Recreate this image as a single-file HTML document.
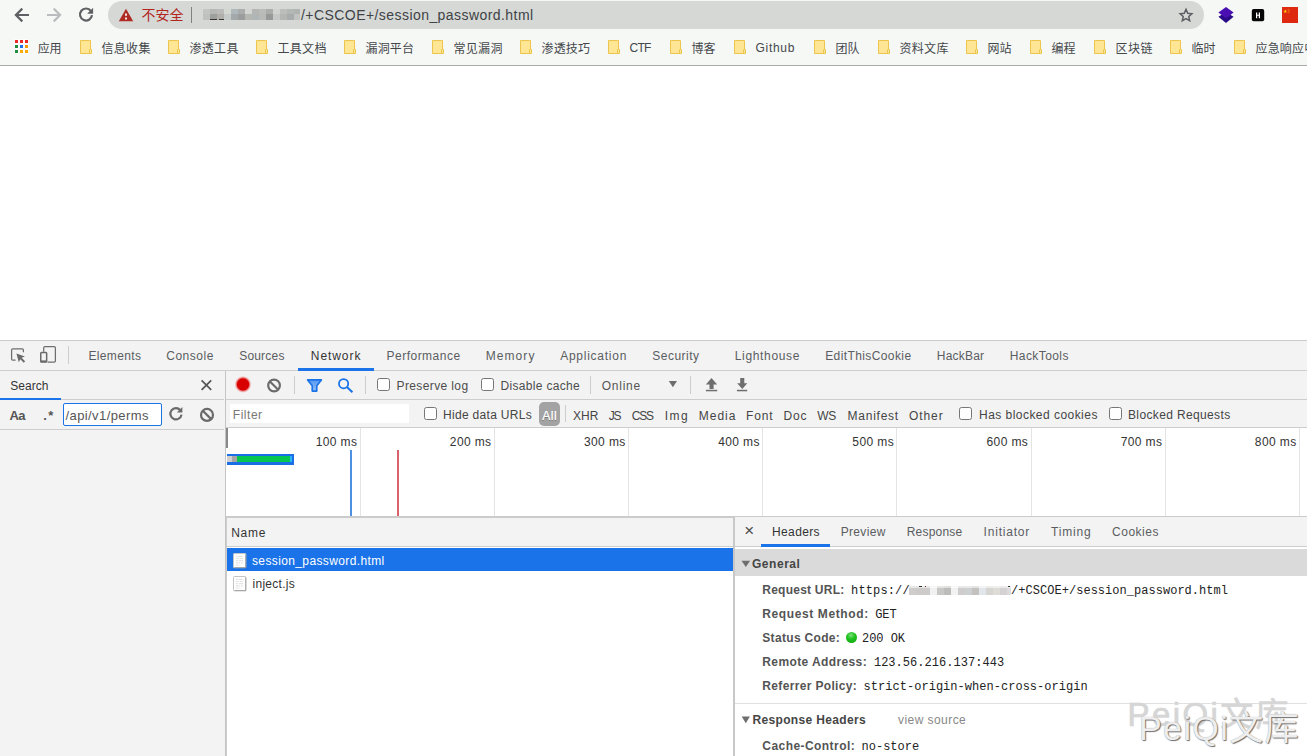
<!DOCTYPE html>
<html lang="zh-CN">
<head>
<meta charset="utf-8">
<title>session_password.html - DevTools Network</title>
<style>
*{box-sizing:border-box;margin:0;padding:0}
html,body{width:1307px;height:756px;overflow:hidden;background:#fff}
body{position:relative;font-family:"Liberation Sans","Noto Sans CJK SC",sans-serif;font-size:12px;color:#333}
div,i,svg,span.t{position:absolute}
.g{left:0;top:0;width:0;height:0}
i{display:block}
.t{white-space:pre;line-height:1;font-size:12px;color:#333}
.m{font-family:"Liberation Mono","Noto Sans CJK SC",monospace}
.b{font-weight:700}
/* browser chrome */
#chrome{left:0;top:0;width:1307px;height:66px;background:#f6f8f6;border-bottom:1px solid #a9aba8}
#omni{left:108px;top:1px;width:1096px;height:28px;border-radius:14px;background:#d5d8d5}
#sep{left:191px;top:7px;width:1px;height:16px;background:#7f827f}
.fold{top:40px}
/* page */
#page{left:0;top:66px;width:1307px;height:274px;background:#fff}
/* devtools */
#dt{left:0;top:340px;width:1307px;height:416px;background:#f3f3f3;border-top:1px solid #cacaca}
.hl{height:1px;background:#cdcdcd}
.vl{width:1px;background:#cdcdcd}
.cb{width:13px;height:13px;border:1px solid #767676;border-radius:2.5px;background:#fff}
.gl{top:428px;width:1px;height:88px;background:#e4e4e4}
.und{height:2.5px;background:#1a73e8}
#wm1,#wm2{white-space:pre;line-height:1;font-size:34px;font-family:"Liberation Sans","Noto Sans CJK SC",sans-serif}
</style>
</head>
<body>
<svg width="0" height="0" style="position:absolute">
<defs>
<g id="fold"><path d="M0.5 0.5h10v9h1v4h-11z" fill="#ffe694" stroke="#ecc44e" stroke-width="1"/><path d="M9.500 9.500v4" stroke="#ecc44e" stroke-width="1" fill="none"/></g>
<g id="doc"><rect x=".5" y=".5" width="12.300" height="14.200" rx=".8" fill="#fff" stroke="#c4c4c4"/><path d="M12.800 1.500v13.200H1.500" fill="none" stroke="#8f8f8f" stroke-opacity=".75"/><path d="M2.800 3.300h2M5.800 3.300h4M2.800 5.500h3M6.800 5.500h3.200M2.800 7.700h2.400M6 7.700h4M2.800 9.900h4M7.800 9.900h2M2.800 12.100h2.600M6.400 12.100h1" stroke="#e4e4e4" stroke-width="1.200"/></g>
</defs>
</svg>

<!-- ================= Browser toolbar ================= -->
<div id="chrome">
  <!-- back / forward / reload -->
  <svg style="left:12px;top:5px" width="20" height="20" viewBox="0 0 20 20"><path d="M17 10H4.400M10.300 3.600L3.900 10l6.400 6.400" fill="none" stroke="#5e6063" stroke-width="2.200"/></svg>
  <svg style="left:44px;top:5px" width="20" height="20" viewBox="0 0 20 20"><path d="M3 10h12.600M9.700 3.600l6.400 6.400-6.400 6.400" fill="none" stroke="#bbbcbe" stroke-width="2.200"/></svg>
  <svg style="left:76px;top:5px" width="20" height="20" viewBox="0 0 20 20"><path d="M14.900 6A6 6 0 1 0 16 10.200" fill="none" stroke="#5e6063" stroke-width="2.200"/><path d="M17.100 2.800v6h-6z" fill="#5e6063"/></svg>
  <div id="omni"></div>
  <!-- not secure triangle -->
  <svg style="left:118px;top:7.600px" width="16" height="14" viewBox="0 0 16 14"><path d="M8 .8L15.200 13.200H.8z" fill="#ae2a22"/><path d="M7 5.400h2v2.300H7zM7 9.600h2v1.800H7z" fill="#f6e4e1"/></svg>
  <i id="sep"></i>
  <!-- blurred host (mosaic) -->
  <svg style="left:203px;top:9px" width="98" height="11" viewBox="0 0 98 11" shape-rendering="crispEdges">
    <rect x="0" y="0" width="7" height="5.4" fill="#c3c5c3"/><rect x="0" y="5.4" width="7" height="5.4" fill="#bfc1bf"/>
    <rect x="7" y="0" width="7" height="5.4" fill="#b5b8b6"/><rect x="7" y="5.4" width="7" height="5.4" fill="#9da09e"/>
    <rect x="14" y="0" width="7" height="5.4" fill="#bbbcba"/><rect x="14" y="5.4" width="7" height="5.4" fill="#b0afaa"/>
    <rect x="21" y="0" width="7" height="5.4" fill="#d5d7d1"/><rect x="21" y="5.4" width="7" height="5.4" fill="#c6cac8"/>
    <rect x="28" y="0" width="7" height="5.4" fill="#afb9bc"/><rect x="28" y="5.4" width="7" height="5.4" fill="#a3a9aa"/>
    <rect x="35" y="0" width="7" height="5.4" fill="#a9adab"/><rect x="35" y="5.4" width="7" height="5.4" fill="#9a9d9b"/>
    <rect x="42" y="0" width="7" height="5.4" fill="#d3d5d2"/><rect x="42" y="5.4" width="7" height="5.4" fill="#b5b8b2"/>
    <rect x="49" y="0" width="7" height="5.4" fill="#b3b6b3"/><rect x="49" y="5.4" width="7" height="5.4" fill="#b0b5b5"/>
    <rect x="56" y="0" width="7" height="5.4" fill="#babcba"/><rect x="56" y="5.4" width="7" height="5.4" fill="#b8bab8"/>
    <rect x="63" y="0" width="7" height="5.4" fill="#a9adab"/><rect x="63" y="5.4" width="7" height="5.4" fill="#969997"/>
    <rect x="70" y="0" width="7" height="5.4" fill="#d0d3d0"/><rect x="70" y="5.4" width="7" height="5.4" fill="#c5c8c6"/>
    <rect x="77" y="0" width="7" height="5.4" fill="#bcbebc"/><rect x="77" y="5.4" width="7" height="5.4" fill="#b4b6b4"/>
    <rect x="84" y="0" width="7" height="5.4" fill="#b4b8b5"/><rect x="84" y="5.4" width="7" height="5.4" fill="#a8acad"/>
    <rect x="91" y="0" width="6" height="5.4" fill="#b0b3b1"/><rect x="91" y="5.4" width="6" height="5.4" fill="#c0c3c0"/>
    <rect x="7" y="10" width="7" height="1" fill="#3a3532"/><rect x="16" y="10" width="4.5" height="1" fill="#3a3532"/>
  </svg>
  <!-- star -->
  <svg style="left:1178px;top:7px" width="16" height="16" viewBox="0 0 16 16"><path d="M8 2.400l1.750 3.950 4.150.4-3.150 2.800.95 4.150L8 11.500l-3.700 2.200.95-4.150L2.100 6.750l4.150-.4z" fill="none" stroke="#5b5e62" stroke-width="1.5" stroke-linejoin="miter"/></svg>
  <!-- extension icons -->
  <svg style="left:1217px;top:6px" width="18" height="18" viewBox="0 0 18 18"><path d="M9 6.2l7.6 4.6L9 17 1.4 10.8z" fill="#2a0a86"/><path d="M9 1l7.6 5.6L9 12.2 1.4 6.6z" fill="#4a0fb3"/></svg>
  <svg style="left:1251px;top:9px" width="14" height="13" viewBox="0 0 14 13"><rect x=".8" y=".1" width="12.4" height="12.2" rx="1.8" fill="#050505"/><path d="M5 3.4h1.200v2.300h1.600V3.400H9v5.800H7.800V6.800H6.200v2.400H5z" fill="#fff"/></svg>
  <svg style="left:1282px;top:7px" width="16" height="16" viewBox="0 0 16 16"><rect width="16" height="16" fill="#de2910"/><path d="M3.300 2.500l.45 1.300h1.400l-1.150.85.45 1.350-1.150-.85-1.150.85.45-1.350-1.150-.85h1.400z" fill="#ffde00"/><circle cx="6.100" cy="2.200" r=".45" fill="#ffde00"/><circle cx="7" cy="3.300" r=".45" fill="#ffde00"/><circle cx="7" cy="4.700" r=".45" fill="#ffde00"/><circle cx="6.100" cy="5.800" r=".45" fill="#ffde00"/></svg>
  <!-- bookmarks bar -->
  <svg style="left:14px;top:39px" width="15" height="15" viewBox="0 0 15 15">
    <rect x="0" y="0" width="15" height="15" fill="#fbfcfb"/>
    <rect x="1" y="1" width="3" height="3" fill="#ea2a26"/><rect x="6" y="1" width="3" height="3" fill="#ea2a26"/><rect x="11" y="1" width="3" height="3" fill="#ea2a26"/>
    <rect x="1" y="6" width="3" height="3" fill="#1e8e3e"/><rect x="6" y="6" width="3" height="3" fill="#1a73e8"/><rect x="11" y="6" width="3" height="3" fill="#ee9a00"/>
    <rect x="1" y="11" width="3" height="3" fill="#1e8e3e"/><rect x="6" y="11" width="3" height="3" fill="#f9ab00"/><rect x="11" y="11" width="3" height="3" fill="#f9ab00"/>
  </svg>
  <svg class="fold" style="left:80px" width="13" height="15" viewBox="0 0 13 15"><use href="#fold"/></svg><svg class="fold" style="left:168px" width="13" height="15" viewBox="0 0 13 15"><use href="#fold"/></svg><svg class="fold" style="left:256px" width="13" height="15" viewBox="0 0 13 15"><use href="#fold"/></svg><svg class="fold" style="left:344px" width="13" height="15" viewBox="0 0 13 15"><use href="#fold"/></svg><svg class="fold" style="left:432px" width="13" height="15" viewBox="0 0 13 15"><use href="#fold"/></svg><svg class="fold" style="left:520px" width="13" height="15" viewBox="0 0 13 15"><use href="#fold"/></svg><svg class="fold" style="left:608px" width="13" height="15" viewBox="0 0 13 15"><use href="#fold"/></svg><svg class="fold" style="left:670px" width="13" height="15" viewBox="0 0 13 15"><use href="#fold"/></svg><svg class="fold" style="left:734px" width="13" height="15" viewBox="0 0 13 15"><use href="#fold"/></svg><svg class="fold" style="left:814px" width="13" height="15" viewBox="0 0 13 15"><use href="#fold"/></svg><svg class="fold" style="left:878px" width="13" height="15" viewBox="0 0 13 15"><use href="#fold"/></svg><svg class="fold" style="left:966px" width="13" height="15" viewBox="0 0 13 15"><use href="#fold"/></svg><svg class="fold" style="left:1030px" width="13" height="15" viewBox="0 0 13 15"><use href="#fold"/></svg><svg class="fold" style="left:1094px" width="13" height="15" viewBox="0 0 13 15"><use href="#fold"/></svg><svg class="fold" style="left:1170px" width="13" height="15" viewBox="0 0 13 15"><use href="#fold"/></svg><svg class="fold" style="left:1234px" width="13" height="15" viewBox="0 0 13 15"><use href="#fold"/></svg>
</div>

<!-- ================= Page (blank) ================= -->
<div id="page"></div>

<!-- ================= DevTools ================= -->
<div id="dt"></div>
<!-- main tab strip -->
<!-- DevTools toolbar icons (page coordinates) -->
<svg id="ico" style="left:0;top:340px" width="1307" height="100" viewBox="0 340 1307 100">
  <defs><radialGradient id="rec"><stop offset="0" stop-color="#d80000"/><stop offset=".66" stop-color="#d80000"/><stop offset=".76" stop-color="#e85050" stop-opacity=".8"/><stop offset="1" stop-color="#f5aaaa" stop-opacity="0"/></radialGradient>
  <linearGradient id="fun" x1="0" y1="0" x2="0" y2="1"><stop offset="0" stop-color="#5a9af0"/><stop offset="1" stop-color="#8bbaf6"/></linearGradient></defs>
  <!-- inspect element -->
  <path d="M23.400 352.200V350.100a1.200 1.200 0 0 0-1.200-1.200H12.800a1.200 1.200 0 0 0-1.200 1.200V359a1.200 1.200 0 0 0 1.200 1.200H15.600" fill="none" stroke="#6e6e6e" stroke-width="1.250"/>
  <path d="M16.400 353.500l8.500 3-3.300 1.350 3.500 3.500-1.300 1.300-3.500-3.500-1.500 3.150z" fill="#6a6a6a"/>
  <!-- device toolbar -->
  <path d="M43.700 351.800V347.900a1.200 1.200 0 0 1 1.200-1.200H54.200a1.200 1.200 0 0 1 1.200 1.200V361a1.200 1.200 0 0 1-1.200 1.200H47.600" fill="none" stroke="#6e6e6e" stroke-width="1.250"/>
  <rect x="40.750" y="352.400" width="5.900" height="9.700" rx=".8" fill="none" stroke="#6a6a6a" stroke-width="1.500"/>
  <path d="M40.750 361.300h5.900" stroke="#6a6a6a" stroke-width="1.800"/>
  <!-- search drawer: close, refresh, clear -->
  <path d="M201.600 380.300l9.600 9.600M211.200 380.300l-9.600 9.600" stroke="#555" stroke-width="1.700" fill="none"/>
  <path d="M180.300 410.200A5.600 5.600 0 1 0 181.500 414.600" fill="none" stroke="#6a6a6a" stroke-width="2.200"/>
  <path d="M182.400 407v5.600h-5.600z" fill="#6a6a6a"/>
  <circle cx="207" cy="414.900" r="6" fill="none" stroke="#6a6a6a" stroke-width="2.200"/><path d="M202.800 410.700l8.400 8.400" stroke="#6a6a6a" stroke-width="2.200"/>
  <!-- record, clear -->
  <circle cx="243" cy="384.400" r="8.600" fill="url(#rec)"/>
  <circle cx="274.050" cy="385.500" r="5.850" fill="none" stroke="#6a6a6a" stroke-width="2.150"/><path d="M269.900 381.400l8.300 8.300" stroke="#6a6a6a" stroke-width="2.150"/>
  <!-- filter, search -->
  <path d="M307.600 379.900h13.800l-4.600 5.900v5.300h-4.600v-5.300z" fill="url(#fun)" stroke="#1a73e8" stroke-width="1.600" stroke-linejoin="round"/>
  <circle cx="343.600" cy="383.700" r="4.600" fill="none" stroke="#1a73e8" stroke-width="1.800"/><path d="M346.900 387l5.500 5.200" stroke="#1a73e8" stroke-width="2.100"/>
  <!-- throttling dropdown arrow, import / export HAR -->
  <path d="M668.800 381h8.200l-4.100 6.200z" fill="#6e6e6e"/>
  <path d="M711.500 378l5.700 6.600h-3.600v4.400h-4.100v-4.400h-3.600z" fill="#6e6e6e"/><path d="M705.900 390.550h11.300" stroke="#6e6e6e" stroke-width="1.500"/>
  <path d="M740.200 378h4.100v5.300h3l-5.050 5.800-5.050-5.800h3z" fill="#6e6e6e"/><path d="M736.900 390.550h10.300" stroke="#6e6e6e" stroke-width="1.500"/>
</svg>
<i class="vl" style="left:68px;top:346px;height:18px"></i>
<i class="hl" style="left:0;top:370px;width:1307px"></i>
<i class="und" style="left:298px;top:368px;width:76px;height:3px"></i>

<!-- left: Search drawer -->
<i class="vl" style="left:225px;top:371px;height:385px;background:#c4c4c4"></i>
<i class="hl" style="left:0;top:399px;width:224px"></i>
<i class="und" style="left:0;top:397.500px;width:61px"></i>
<i style="left:63px;top:403px;width:99px;height:23px;background:#fff;border:1.500px solid #1a73e8;border-radius:2px"></i>
<i class="hl" style="left:0;top:429px;width:224px"></i>

<!-- right: Network toolbar -->
<i class="hl" style="left:226px;top:399px;width:1081px"></i>
<i class="vl" style="left:294px;top:376px;height:18px"></i>
<i class="vl" style="left:365px;top:376px;height:18px"></i>
<i class="cb" style="left:377px;top:378px"></i>
<i class="cb" style="left:481px;top:378px"></i>
<i class="vl" style="left:590px;top:376px;height:18px"></i>
<i class="vl" style="left:690px;top:376px;height:18px"></i>

<!-- filter row -->
<i style="left:230px;top:404px;width:179px;height:19px;background:#fff"></i>
<i class="cb" style="left:423.500px;top:407px"></i>
<i style="left:539px;top:402px;width:21px;height:23.500px;border-radius:5px;background:#a3a3a3"></i>
<i class="vl" style="left:565px;top:405px;height:17px"></i>
<i class="cb" style="left:959px;top:407px"></i>
<i class="cb" style="left:1109px;top:407px"></i>
<i class="hl" style="left:226px;top:427px;width:1081px"></i>

<!-- timeline overview -->
<i style="left:226px;top:428px;width:1081px;height:88px;background:#fff"></i>
<i class="gl" style="left:359.7px"></i><i class="gl" style="left:493.8px"></i><i class="gl" style="left:628.0px"></i><i class="gl" style="left:762.2px"></i><i class="gl" style="left:896.3px"></i><i class="gl" style="left:1030.5px"></i><i class="gl" style="left:1164.7px"></i><i class="gl" style="left:1298.9px"></i>
<i style="left:226.300px;top:428px;width:1.700px;height:19.600px;background:#888"></i>
<i style="left:226.500px;top:454px;width:67.500px;height:11px;background:#1a6ee6"></i>
<i style="left:226.500px;top:456.300px;width:5.500px;height:5.500px;background:#cfcfcf"></i>
<i style="left:232px;top:456.300px;width:5px;height:5.500px;background:#a5a5a5"></i>
<i style="left:237px;top:456.300px;width:53px;height:5.500px;background:#04c650"></i>
<i style="left:290px;top:456.300px;width:2px;height:5.500px;background:#2bb4f6"></i>
<i style="left:350px;top:450px;width:1.5px;height:66px;background:#4d8fe0"></i>
<i style="left:397.3px;top:450px;width:1.5px;height:66px;background:#d9626c"></i>
<i style="left:226px;top:516px;width:1081px;height:1px;background:#cbcbcb"></i>
<i style="left:226px;top:517px;width:509px;height:1px;background:#cbcbcb"></i>

<!-- request list -->
<i style="left:226px;top:546px;width:507px;height:210px;background:#fff"></i>
<i class="hl" style="left:226px;top:546px;width:507px"></i>
<i style="left:227px;top:548px;width:506px;height:23px;background:#1a73e8"></i>
<i class="vl" style="left:226px;top:518px;height:238px"></i>
<svg style="left:233px;top:552.500px" width="14" height="16" viewBox="0 0 14 16"><use href="#doc"/></svg>
<svg style="left:233px;top:575.500px" width="14" height="16" viewBox="0 0 14 16"><use href="#doc"/></svg>
<i style="left:733px;top:517px;width:2px;height:239px;background:#c8c8c8"></i>

<!-- request details -->
<i style="left:735px;top:546px;width:572px;height:210px;background:#fff"></i>
<i class="hl" style="left:735px;top:546px;width:572px"></i>
<i class="und" style="left:761px;top:544px;width:69px;height:3px"></i>
<i style="left:735px;top:549px;width:572px;height:27px;background:#dadada"></i>
<svg style="left:740.5px;top:560px" width="10" height="8" viewBox="0 0 10 8"><path d="M.5.8h8.600L4.800 7z" fill="#6e6e6e"/></svg>
<i style="left:846px;top:632px;width:11px;height:11px;border-radius:50%;background:radial-gradient(circle at 45% 30%,#7be07b 0,#1fc21f 40%,#0ea00e 100%)"></i>
<!-- blurred host in Request URL -->
<svg style="left:909px;top:586px" width="102" height="9" viewBox="0 0 102 9" shape-rendering="crispEdges">
  <rect x="0" y="0" width="7" height="2" fill="#e8e8e8"/><rect x="0" y="2" width="7" height="7" fill="#cecdcc"/>
  <rect x="7" y="0" width="7" height="2" fill="#e8e7e7"/><rect x="7" y="2" width="7" height="7" fill="#cccbca"/>
  <rect x="14" y="0" width="7" height="2" fill="#e8e8e7"/><rect x="14" y="2" width="7" height="7" fill="#cdcccb"/>
  <rect x="21" y="0" width="7" height="2" fill="#f8f8f8"/><rect x="21" y="2" width="7" height="7" fill="#f0f1f0"/>
  <rect x="28" y="0" width="7" height="2" fill="#e6e6e5"/><rect x="28" y="2" width="7" height="7" fill="#c8c8c7"/>
  <rect x="35" y="0" width="7" height="2" fill="#e0e0df"/><rect x="35" y="2" width="7" height="7" fill="#bcbcba"/>
  <rect x="42" y="0" width="7" height="2" fill="#f8f9f8"/><rect x="42" y="2" width="7" height="7" fill="#f1f2f1"/>
  <rect x="49" y="0" width="7" height="2" fill="#e9e8e8"/><rect x="49" y="2" width="7" height="7" fill="#cfcccd"/>
  <rect x="56" y="0" width="7" height="2" fill="#e8e9ea"/><rect x="56" y="2" width="7" height="7" fill="#cdd0d1"/>
  <rect x="63" y="0" width="7" height="2" fill="#e4e3e1"/><rect x="63" y="2" width="7" height="7" fill="#c4c2be"/>
  <rect x="70" y="0" width="7" height="2" fill="#f1f3f5"/><rect x="70" y="2" width="7" height="7" fill="#e2e6ea"/>
  <rect x="77" y="0" width="7" height="2" fill="#edecea"/><rect x="77" y="2" width="7" height="7" fill="#d7d5d1"/>
  <rect x="84" y="0" width="7" height="2" fill="#efefed"/><rect x="84" y="2" width="7" height="7" fill="#dddcd7"/>
  <rect x="91" y="0" width="7" height="2" fill="#eceaeb"/><rect x="91" y="2" width="7" height="7" fill="#d5d2d3"/>
  <rect x="98" y="0" width="3.6" height="2" fill="#efeff0"/><rect x="98" y="2" width="3.6" height="7" fill="#dcdcde"/>
  <rect x="10" y="0" width="2.5" height="1" fill="#333"/><rect x="16" y="0" width="1" height="1" fill="#722"/><rect x="99" y="0" width="1.5" height="1" fill="#333"/>
</svg>
<i style="left:735px;top:703px;width:572px;height:1px;background:#e0e0e0"></i>
<svg style="left:740.5px;top:716px" width="10" height="8" viewBox="0 0 10 8"><path d="M.7.4h8.200L4.800 7.200z" fill="#6e6e6e"/></svg>

<div class="g" id="omnibox">
<span id="t0" class="t" style="left:141.50px;top:8.00px;font-size:14px;color:#b3261e;letter-spacing:-0.050px;">不安全</span>
<span id="t1" class="t" style="left:301.00px;top:8.00px;font-size:14px;color:#404347;letter-spacing:0.437px;">/+CSCOE+/session_password.html</span>
</div>
<div class="g" id="bookmarks">
<span id="t2" class="t" style="left:37.70px;top:43.00px;color:#44474a;letter-spacing:-0.116px;">应用</span>
<span id="t3" class="t" style="left:101.50px;top:43.00px;color:#44474a;letter-spacing:0.295px;">信息收集</span>
<span id="t4" class="t" style="left:189.50px;top:43.00px;color:#44474a;letter-spacing:0.295px;">渗透工具</span>
<span id="t5" class="t" style="left:277.50px;top:43.00px;color:#44474a;letter-spacing:0.295px;">工具文档</span>
<span id="t6" class="t" style="left:365.50px;top:43.00px;color:#44474a;letter-spacing:0.128px;">漏洞平台</span>
<span id="t7" class="t" style="left:453.50px;top:43.00px;color:#44474a;letter-spacing:0.295px;">常见漏洞</span>
<span id="t8" class="t" style="left:541.50px;top:43.00px;color:#44474a;letter-spacing:0.128px;">渗透技巧</span>
<span id="t9" class="t" style="left:629.50px;top:42.00px;color:#44474a;letter-spacing:-0.714px;">CTF</span>
<span id="t10" class="t" style="left:691.50px;top:43.00px;color:#44474a;letter-spacing:-0.116px;">博客</span>
<span id="t11" class="t" style="left:755.50px;top:42.00px;color:#44474a;letter-spacing:0.708px;">Github</span>
<span id="t12" class="t" style="left:835.50px;top:43.00px;color:#44474a;letter-spacing:-0.116px;">团队</span>
<span id="t13" class="t" style="left:899.50px;top:43.00px;color:#44474a;letter-spacing:0.295px;">资料文库</span>
<span id="t14" class="t" style="left:987.50px;top:43.00px;color:#44474a;letter-spacing:-0.116px;">网站</span>
<span id="t15" class="t" style="left:1051.50px;top:43.00px;color:#44474a;letter-spacing:-0.116px;">编程</span>
<span id="t16" class="t" style="left:1115.50px;top:43.00px;color:#44474a;letter-spacing:0.442px;">区块链</span>
<span id="t17" class="t" style="left:1191.50px;top:43.00px;color:#44474a;letter-spacing:-0.116px;">临时</span>
<span id="t18" class="t" style="left:1255.50px;top:43.00px;color:#44474a;letter-spacing:0.177px;">应急响应中心</span>
</div>
<div class="g" id="dt-tabs">
<span id="t19" class="t" style="left:88.50px;top:350.00px;color:#5a5d61;letter-spacing:0.338px;">Elements</span>
<span id="t20" class="t" style="left:166.20px;top:350.00px;color:#5a5d61;letter-spacing:0.528px;">Console</span>
<span id="t21" class="t" style="left:239.20px;top:350.00px;color:#5a5d61;letter-spacing:0.195px;">Sources</span>
<span id="t22" class="t" style="left:310.80px;top:350.00px;letter-spacing:0.931px;">Network</span>
<span id="t23" class="t" style="left:386.50px;top:350.00px;color:#5a5d61;letter-spacing:0.490px;">Performance</span>
<span id="t24" class="t" style="left:485.80px;top:350.00px;color:#5a5d61;letter-spacing:1.051px;">Memory</span>
<span id="t25" class="t" style="left:560.20px;top:350.00px;color:#5a5d61;letter-spacing:0.748px;">Application</span>
<span id="t26" class="t" style="left:652.20px;top:350.00px;color:#5a5d61;letter-spacing:0.506px;">Security</span>
<span id="t27" class="t" style="left:734.80px;top:350.00px;color:#5a5d61;letter-spacing:0.653px;">Lighthouse</span>
<span id="t28" class="t" style="left:825.20px;top:350.00px;color:#5a5d61;letter-spacing:0.400px;">EditThisCookie</span>
<span id="t29" class="t" style="left:936.80px;top:350.00px;color:#5a5d61;letter-spacing:0.214px;">HackBar</span>
<span id="t30" class="t" style="left:1009.80px;top:350.00px;color:#5a5d61;letter-spacing:0.405px;">HackTools</span>
</div>
<div class="g" id="search-drawer">
<span id="t31" class="t" style="left:10.30px;top:380.00px;letter-spacing:0.014px;">Search</span>
</div>
<div class="g" id="net-toolbar">
<span id="t32" class="t" style="left:396.50px;top:380.00px;color:#4d4d4d;letter-spacing:0.384px;">Preserve log</span>
<span id="t33" class="t" style="left:500.50px;top:380.00px;color:#4d4d4d;letter-spacing:0.319px;">Disable cache</span>
<span id="t34" class="t" style="left:601.80px;top:380.00px;color:#555;letter-spacing:0.723px;">Online</span>
</div>
<div class="g search-drawer">
<span id="t35" class="t b" style="left:9.50px;top:409.00px;font-size:13px;color:#555;letter-spacing:-0.725px;">Aa</span>
<span id="t36" class="t b" style="left:43.20px;top:409.00px;font-size:13px;color:#555;letter-spacing:1.528px;">.*</span>
<span id="t37" class="t" style="left:65.50px;top:409.00px;font-size:13px;color:#555;letter-spacing:0.404px;">/api/v1/perms</span>
</div>
<div class="g" id="net-filter">
<span id="t38" class="t" style="left:232.80px;top:409.00px;color:#777;letter-spacing:0.526px;">Filter</span>
<span id="t39" class="t" style="left:443.00px;top:409.00px;color:#454545;letter-spacing:0.306px;">Hide data URLs</span>
<span id="t40" class="t" style="left:542.20px;top:410.00px;color:#fff;letter-spacing:0.578px;text-shadow:0 1px 0 rgba(0,0,0,.3),0 0 .6px #fff;">All</span>
<span id="t41" class="t" style="left:573.00px;top:410.00px;color:#454545;letter-spacing:0.028px;">XHR</span>
<span id="t42" class="t" style="left:608.80px;top:410.00px;color:#454545;letter-spacing:-1.200px;">JS</span>
<span id="t43" class="t" style="left:631.80px;top:410.00px;color:#454545;letter-spacing:-1.200px;">CSS</span>
<span id="t44" class="t" style="left:664.80px;top:410.00px;color:#454545;letter-spacing:1.442px;">Img</span>
<span id="t45" class="t" style="left:698.80px;top:410.00px;color:#454545;letter-spacing:0.978px;">Media</span>
<span id="t46" class="t" style="left:746.00px;top:410.00px;color:#454545;letter-spacing:0.895px;">Font</span>
<span id="t47" class="t" style="left:783.50px;top:410.00px;color:#454545;letter-spacing:0.778px;">Doc</span>
<span id="t48" class="t" style="left:817.20px;top:410.00px;color:#454545;letter-spacing:-0.144px;">WS</span>
<span id="t49" class="t" style="left:847.50px;top:410.00px;color:#454545;letter-spacing:0.763px;">Manifest</span>
<span id="t50" class="t" style="left:909.00px;top:410.00px;color:#454545;letter-spacing:0.921px;">Other</span>
<span id="t51" class="t" style="left:979.00px;top:409.00px;color:#454545;letter-spacing:0.463px;">Has blocked cookies</span>
<span id="t52" class="t" style="left:1128.00px;top:409.00px;color:#454545;letter-spacing:0.364px;">Blocked Requests</span>
</div>
<div class="g" id="net-overview">
<span id="t53" class="t" style="left:315.67px;top:436.00px;letter-spacing:0.388px;">100 ms</span>
<span id="t54" class="t" style="left:449.84px;top:436.00px;letter-spacing:0.388px;">200 ms</span>
<span id="t55" class="t" style="left:584.01px;top:436.00px;letter-spacing:0.388px;">300 ms</span>
<span id="t56" class="t" style="left:718.18px;top:436.00px;letter-spacing:0.388px;">400 ms</span>
<span id="t57" class="t" style="left:852.35px;top:436.00px;letter-spacing:0.388px;">500 ms</span>
<span id="t58" class="t" style="left:986.52px;top:436.00px;letter-spacing:0.388px;">600 ms</span>
<span id="t59" class="t" style="left:1120.69px;top:436.00px;letter-spacing:0.388px;">700 ms</span>
<span id="t60" class="t" style="left:1254.86px;top:436.00px;letter-spacing:0.388px;">800 ms</span>
</div>
<div class="g" id="request-list">
<span id="t61" class="t" style="left:231.20px;top:527.00px;letter-spacing:0.728px;">Name</span>
<span id="t62" class="t" style="left:252.00px;top:555.00px;color:#fff;letter-spacing:0.373px;">session_password.html</span>
<span id="t63" class="t" style="left:252.50px;top:578.00px;letter-spacing:0.273px;">inject.js</span>
</div>
<div class="g" id="detail-tabs">
<span id="t64" class="t" style="left:744.30px;top:522.00px;font-size:17px;color:#4a4a4a;">×</span>
<span id="t65" class="t" style="left:772.00px;top:526.00px;letter-spacing:0.373px;">Headers</span>
<span id="t66" class="t" style="left:840.70px;top:526.00px;color:#5a5d61;letter-spacing:0.335px;">Preview</span>
<span id="t67" class="t" style="left:906.70px;top:526.00px;color:#5a5d61;letter-spacing:0.208px;">Response</span>
<span id="t68" class="t" style="left:983.60px;top:526.00px;color:#5a5d61;letter-spacing:0.793px;">Initiator</span>
<span id="t69" class="t" style="left:1050.90px;top:526.00px;color:#5a5d61;letter-spacing:0.867px;">Timing</span>
<span id="t70" class="t" style="left:1112.10px;top:526.00px;color:#5a5d61;letter-spacing:0.490px;">Cookies</span>
</div>
<div class="g" id="headers-view">
<span id="t71" class="t b" style="left:752.00px;top:558.00px;color:#454545;letter-spacing:0.533px;">General</span>
<span id="t72" class="t b" style="left:762.30px;top:584.00px;color:#545454;letter-spacing:0.232px;">Request URL:</span>
<span id="t73" class="t m" style="left:851.10px;top:585.00px;color:#222;letter-spacing:0.127px;">https://</span>
<span id="t74" class="t m" style="left:1011.10px;top:585.00px;color:#222;letter-spacing:0.029px;">/+CSCOE+/session_password.html</span>
<span id="t75" class="t b" style="left:762.30px;top:608.00px;color:#545454;letter-spacing:0.611px;">Request Method:</span>
<span id="t76" class="t m" style="left:875.20px;top:609.00px;color:#222;letter-spacing:-0.055px;">GET</span>
<span id="t77" class="t b" style="left:762.30px;top:632.00px;color:#545454;letter-spacing:0.317px;">Status Code:</span>
<span id="t78" class="t m" style="left:862.10px;top:633.00px;color:#222;letter-spacing:-0.064px;">200 OK</span>
<span id="t79" class="t b" style="left:762.30px;top:656.00px;color:#545454;letter-spacing:0.391px;">Remote Address:</span>
<span id="t80" class="t m" style="left:873.90px;top:657.00px;color:#222;letter-spacing:0.034px;">123.56.216.137:443</span>
<span id="t81" class="t b" style="left:762.30px;top:680.00px;color:#545454;letter-spacing:0.342px;">Referrer Policy:</span>
<span id="t82" class="t m" style="left:863.60px;top:681.00px;color:#222;letter-spacing:0.028px;">strict-origin-when-cross-origin</span>
<span id="t83" class="t b" style="left:752.50px;top:714.00px;color:#454545;letter-spacing:0.337px;">Response Headers</span>
<span id="t84" class="t" style="left:898.00px;top:714.00px;color:#888;letter-spacing:0.444px;">view source</span>
<span id="t85" class="t b" style="left:762.30px;top:740.00px;color:#545454;letter-spacing:0.441px;">Cache-Control:</span>
<span id="t86" class="t m" style="left:861.50px;top:741.00px;color:#222;letter-spacing:0.013px;">no-store</span>
</div>

<!-- watermark -->
<span id="wm2" style="position:absolute;left:1127.5px;top:698px;font-size:33px;letter-spacing:2.4px;color:#d6d6d6;-webkit-text-stroke:.5px #d6d6d6;text-shadow:0 0 1px #ddd">PeiQi文库</span>
<span id="wm1" style="position:absolute;left:1139px;top:710.5px;letter-spacing:1.4px;color:#eee;text-shadow:1px 1px 1px #6f6f6f,0 0 1px #999">PeiQi文库</span>
</body>
</html>
